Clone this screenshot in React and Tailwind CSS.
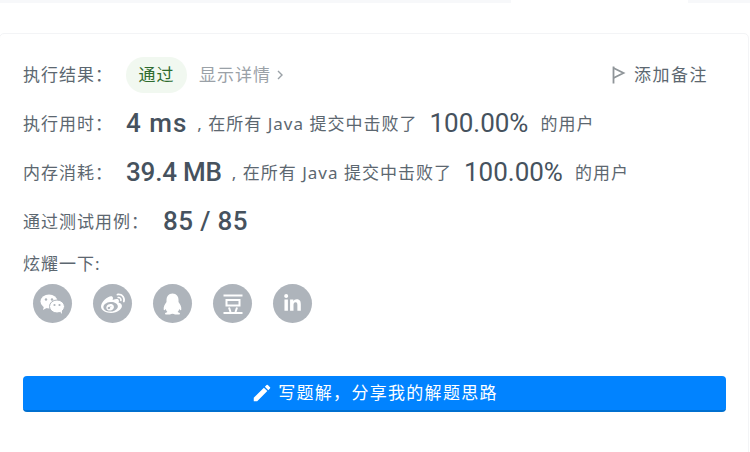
import { FaWeibo, FaLinkedinIn } from 'react-icons/fa';
import { MdEdit } from 'react-icons/md';

const cjk = 'font-["Noto_Sans","Noto_Sans_CJK_SC",sans-serif]';
const num = 'font-["Roboto","Noto_Sans_CJK_SC",sans-serif]';

const Wechat = () => (
    <svg width="25" height="20" viewBox="0 0 25 20">
        <ellipse cx="9" cy="7.5" rx="8.5" ry="7" fill="white" />
        <path d="M4 12l-1 4 4.5-2.5z" fill="white" />
        <circle cx="6" cy="5.5" r="1.2" fill="#aeb4bb" />
        <circle cx="12" cy="5.5" r="1.2" fill="#aeb4bb" />
        <ellipse cx="17" cy="12.5" rx="7.5" ry="6.5" fill="white" stroke="#aeb4bb" strokeWidth="1" />
        <path d="M20 17.5l2 2.5-.2-4z" fill="white" />
        <circle cx="14.5" cy="11" r="1.1" fill="#aeb4bb" />
        <circle cx="19.5" cy="11" r="1.1" fill="#aeb4bb" />
    </svg>
);

const QQ = () => (
    <svg width="25" height="22" viewBox="0 0 25 22" fill="white">
        <path d="M12.5 0.5c-4 0-6 3-6 6.5v2c-1.6 2-3.2 5-2.8 7.5.2 1 1 .8 2-.6.3 1.300 1 2.300 1.700 3-1.500.5-2.400 1.200-2.400 1.800 0 .9 3 1.100 5 .7.8-.3 1.500-.7 2.500-.7s1.700.4 2.500.7c2 .4 5 .2 5-.7 0-.6-.9-1.300-2.400-1.800.7-.7 1.400-1.700 1.700-3 1 1.400 1.800 1.600 2 .6.4-2.500-1.200-5.500-2.800-7.500V7c0-3.500-2-6.500-6-6.500z" />
    </svg>
);

const Douban = () => (
    <svg width="22" height="22" viewBox="0 0 22 22" fill="none" stroke="white" strokeWidth="2">
        <path d="M1.500 2.500h19" />
        <rect x="4.500" y="7" width="13" height="5.500" />
        <path d="M7 14.500l1.500 4.500M15 14.500l-1.500 4.500M1.500 20h19" />
    </svg>
);

const FlagIcon = () => (
    <svg width="14" height="18" viewBox="0 0 14 18" fill="none" stroke="#8f9599" strokeWidth="1.8">
        <path d="M1.500 0.500v17" />
        <path d="M1.500 2l10 5-10 5" />
    </svg>
);

const Circle = ({ children }) => (
    <div className="flex h-[39px] w-[39px] items-center justify-center rounded-full bg-[#aeb4bb] text-white">
        {children}
    </div>
);

const Stat = ({ label, value, percent, valueClass }) => (
    <div className="flex h-[49px] items-center">
        <span className="w-[103px] shrink-0">{label}</span>
        <span className={`${num} ${valueClass} text-[26px] font-medium text-[#46525e]`}>{value}</span>
        <span className="ml-[10px]">, 在所有 Java 提交中击败了</span>
        <span className={`${num} ml-3 text-[26px] tracking-normal text-[#46525e]`}>{percent}</span>
        <span className="ml-3">的用户</span>
    </div>
);

export default function App() {
    return (
        <div className={`${cjk} relative h-[452px] w-[750px] overflow-hidden bg-white text-[17px] tracking-[1px] text-[#5c6770]`}>
            {/* tab strip */}
            <div className="flex h-[3px] bg-[#f7f8fa]">
                <div className="ml-[511px] w-[177px] bg-white"></div>
            </div>

            {/* result card */}
            <div className="-ml-px mt-[30px] h-[440px] w-[750px] rounded-[5px] border border-[#f3f4f6] pl-[23px] pr-[23px] pt-[16px]">
                <div className="flex h-[49px] items-center">
                    <span className="w-[103px] shrink-0">执行结果：</span>
                    <span className="flex h-[36px] w-[61px] items-center justify-center rounded-full bg-[#f1f8f0] text-[#2e6b2e]">通过</span>
                    <span className="ml-3 flex items-center text-[#9aa1a7]">
                        显示详情
                        <svg className="ml-[5px]" width="8" height="12" viewBox="0 0 8 12" fill="none" stroke="currentColor" strokeWidth="1.4">
                            <path d="M2 2l4 4-4 4" />
                        </svg>
                    </span>
                    <span className="ml-auto mr-[17px] flex items-center tracking-[1.500px]">
                        <FlagIcon />
                        <span className="ml-2">添加备注</span>
                    </span>
                </div>

                <Stat label="执行用时：" value="4 ms" percent="100.00%" valueClass="tracking-[1px]" />
                <Stat label="内存消耗：" value="39.4 MB" percent="100.00%" valueClass="tracking-[-0.2px]" />

                <div className="flex h-[49px] items-center">
                    <span className="w-[140px] shrink-0">通过测试用例：</span>
                    <span className={`${num} text-[26px] font-medium tracking-[0.4px] text-[#46525e]`}>85 / 85</span>
                </div>

                <div className="mt-[6px] leading-[24px]">炫耀一下:</div>
                <div className="ml-[10px] mt-[8px] flex gap-[21px]">
                    <Circle><Wechat /></Circle>
                    <Circle><FaWeibo size={24} /></Circle>
                    <Circle><QQ /></Circle>
                    <Circle><Douban /></Circle>
                    <Circle><FaLinkedinIn size={19} /></Circle>
                </div>

                <button className="mt-[53px] flex h-[36px] w-[703px] items-center justify-center rounded-[4px] border-b-2 border-[#0070d0] bg-[#0183ff] tracking-[1.3px] text-white">
                    <MdEdit size={22} className="mr-[5px]" />
                    写题解，分享我的解题思路
                </button>
            </div>
        </div>
    );
}
